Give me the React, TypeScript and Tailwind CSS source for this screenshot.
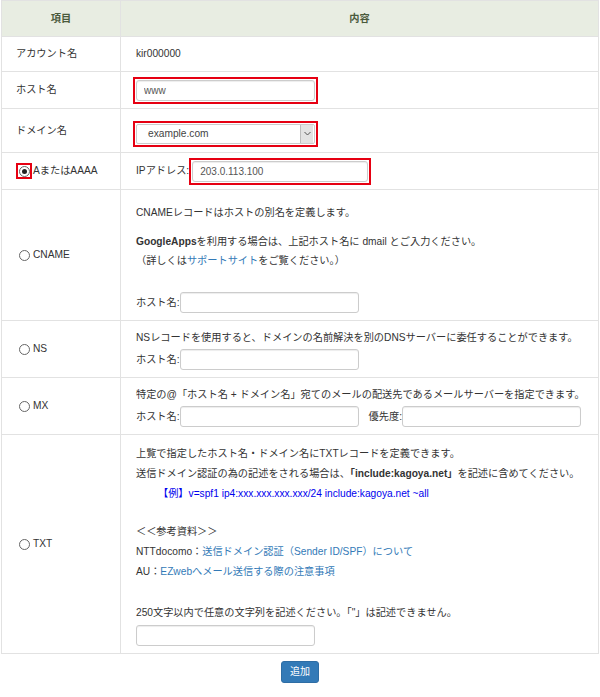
import React from "react";

const inputCls =
  "h-[21px] rounded-[3px] border border-[#cccccc] bg-white px-[7px] text-[10px] text-[#555] shadow-[inset_0_1px_1px_rgba(0,0,0,0.075)] outline-none";

const Radio: React.FC<{ checked?: boolean }> = ({ checked }) => (
  <span className="flex h-[11px] w-[11px] items-center justify-center rounded-full border border-[#666] bg-white">
    {checked && <span className="h-[5px] w-[5px] rounded-full bg-[#222]" />}
  </span>
);

const RadioLabel: React.FC<{ label: string; checked?: boolean }> = ({ label, checked }) => (
  <div className="flex items-center">
    <span
      className={`flex h-[16px] w-[16px] items-center justify-center ${
        checked ? "border-2 border-[#e60012]" : ""
      }`}
    >
      <Radio checked={checked} />
    </span>
    <span className="ml-px">{label}</span>
  </div>
);

const RedBox: React.FC<{ children: React.ReactNode }> = ({ children }) => (
  <div className="-ml-[3px] inline-flex border-2 border-[#e60012] p-px">{children}</div>
);

const App: React.FC = () => {
  const row = "grid grid-cols-[119px_1fr] border-b border-[#e2e2e2]";
  const left = "flex items-center border-r border-[#e2e2e2] pl-[14px]";

  return (
    <div className="min-h-[697px] bg-white font-['Liberation_Sans','Noto_Sans_CJK_JP',sans-serif] text-[10.2px] leading-[20px] text-[#333]">
      <div className="ml-px w-[598px] border-x border-t border-[#e2e2e2]">
        {/* header */}
        <div className={`${row} h-[36px] bg-[#e8ede2] font-bold text-[#4a5a3c]`}>
          <div className="flex items-center justify-center border-r border-[#e2e2e2]">項目</div>
          <div className="flex items-center justify-center">内容</div>
        </div>

        {/* account */}
        <div className={`${row} h-[35px]`}>
          <div className={left}>アカウント名</div>
          <div className="flex items-center pl-[15px]">kir000000</div>
        </div>

        {/* host */}
        <div className={`${row} h-[37px]`}>
          <div className={left}>ホスト名</div>
          <div className="flex items-center pl-[15px]">
            <RedBox>
              <input className={`${inputCls} w-[179px]`} defaultValue="www" />
            </RedBox>
          </div>
        </div>

        {/* domain */}
        <div className={`${row} h-[44px]`}>
          <div className={left}>ドメイン名</div>
          <div className="flex items-center pl-[15px] pt-[6px]">
            <RedBox>
              <div className="flex h-[20px] w-[179px] items-center rounded-[2px] border border-[#cccccc] bg-white pl-[11px] pr-px text-[#444]">
                <span className="flex-1">example.com</span>
                <span className="flex h-[18px] w-[13px] items-center justify-center border-l border-[#bdbdbd] bg-[#e3e3e3]">
                  <svg width="7" height="5" viewBox="0 0 7 5">
                    <polyline points="0.5,1 3.5,4 6.5,1" fill="none" stroke="#555" strokeWidth="1" />
                  </svg>
                </span>
              </div>
            </RedBox>
          </div>
        </div>

        {/* A / AAAA */}
        <div className={`${row} h-[37px]`}>
          <div className={left}>
            <RadioLabel label="AまたはAAAA" checked />
          </div>
          <div className="flex items-center pl-[15px]">
            <span>IPアドレス:</span>
            <div className="inline-flex border-2 border-[#e60012] p-px">
              <input className={`${inputCls} w-[176px]`} defaultValue="203.0.113.100" />
            </div>
          </div>
        </div>

        {/* CNAME */}
        <div className={`${row} h-[131px]`}>
          <div className={left}>
            <RadioLabel label="CNAME" />
          </div>
          <div className="pl-[15px] pt-[13px]">
            <p>CNAMEレコードはホストの別名を定義します。</p>
            <p className="mt-[9px] leading-[19px]">
              <b>GoogleApps</b>を利用する場合は、上記ホスト名に dmail とご入力ください。
              <br />
              （詳しくは<a className="text-[#337ab7]">サポートサイト</a>をご覧ください。）
            </p>
            <div className="mt-[22px] flex items-center">
              <span>ホスト名:</span>
              <input className={`${inputCls} w-[179px]`} />
            </div>
          </div>
        </div>

        {/* NS */}
        <div className={`${row} h-[57px]`}>
          <div className={left}>
            <RadioLabel label="NS" />
          </div>
          <div className="pl-[15px] pt-[7px]">
            <p>NSレコードを使用すると、ドメインの名前解決を別のDNSサーバーに委任することができます。</p>
            <div className="mt-px flex items-center">
              <span>ホスト名:</span>
              <input className={`${inputCls} w-[179px]`} />
            </div>
          </div>
        </div>

        {/* MX */}
        <div className={`${row} h-[57px]`}>
          <div className={left}>
            <RadioLabel label="MX" />
          </div>
          <div className="pl-[15px] pt-[7px]">
            <p>特定の@「ホスト名 + ドメイン名」宛てのメールの配送先であるメールサーバーを指定できます。</p>
            <div className="mt-px flex items-center">
              <span>ホスト名:</span>
              <input className={`${inputCls} w-[179px]`} />
              <span className="ml-[10px]">優先度:</span>
              <input className={`${inputCls} w-[179px]`} />
            </div>
          </div>
        </div>

        {/* TXT */}
        <div className={`${row} h-[219px]`}>
          <div className={left}>
            <RadioLabel label="TXT" />
          </div>
          <div className="pl-[15px] pt-[9px]">
            <p>上覧で指定したホスト名・ドメイン名にTXTレコードを定義できます。</p>
            <p>
              送信ドメイン認証の為の記述をされる場合は、<b>「include:kagoya.net」</b>を記述に含めてください。
            </p>
            <p className="ml-[22px] text-[#0000ee]">【例】v=spf1 ip4:xxx.xxx.xxx.xxx/24 include:kagoya.net ~all</p>
            <p className="mt-[18px]">＜＜参考資料＞＞</p>
            <p>
              NTTdocomo：<a className="text-[#337ab7]">送信ドメイン認証（Sender ID/SPF）について</a>
            </p>
            <p>
              AU：<a className="text-[#337ab7]">EZwebへメール送信する際の注意事項</a>
            </p>
            <p className="mt-[21px]">250文字以内で任意の文字列を記述ください。「"」は記述できません。</p>
            <input className={`${inputCls} mt-[2px] w-[179px]`} />
          </div>
        </div>
      </div>

      {/* submit */}
      <div className="mt-[7px] flex justify-center">
        <button className="h-[22px] w-[38px] rounded-[3px] border border-[#2e6da4] bg-[#337ab7] text-[10px] leading-none text-white">
          追加
        </button>
      </div>
    </div>
  );
};

export default App;
